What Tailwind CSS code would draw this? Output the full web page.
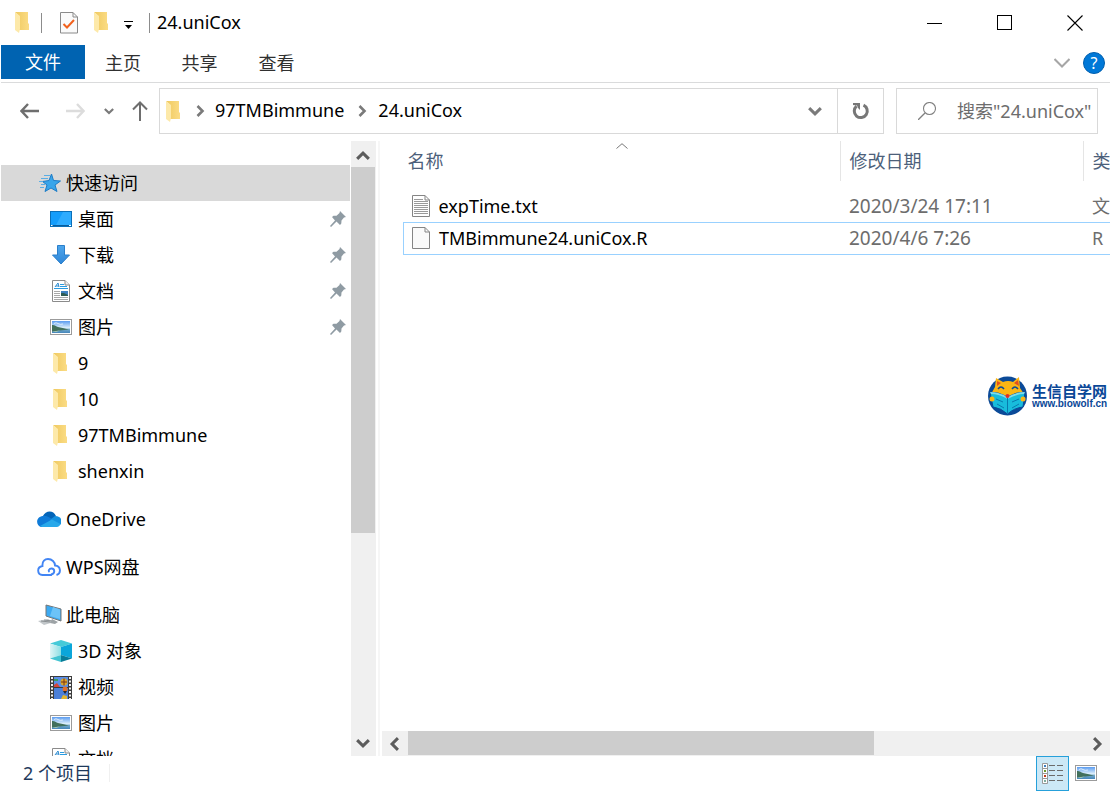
<!DOCTYPE html>
<html lang="zh-CN">
<head>
<meta charset="utf-8">
<title>24.uniCox</title>
<script src="https://cdn.jsdelivr.net/npm/@tailwindcss/browser@4"></script>
</head>
<body class="bg-white">
<svg width="0" height="0" class="absolute" aria-hidden="true">
  <defs>
    <linearGradient id="gFold" x1="0" x2="1"><stop offset="0" stop-color="#efc95f"/><stop offset="1" stop-color="#fbdc85"/></linearGradient>
    <linearGradient id="gSky" x1="0" x2="0" y1="0" y2="1"><stop offset="0" stop-color="#5b9cf0"/><stop offset=".6" stop-color="#e6f4fb"/></linearGradient>
    <linearGradient id="gSea" x1="0" x2="0" y1="0" y2="1"><stop offset="0" stop-color="#7db0cf"/><stop offset="1" stop-color="#4586ba"/></linearGradient>
    <linearGradient id="gCube" x1="0" x2="1"><stop offset="0" stop-color="#e0f5f6"/><stop offset="1" stop-color="#8bdfe4"/></linearGradient>
    <linearGradient id="gDown" x1="0" x2="0" y1="0" y2="1"><stop offset="0" stop-color="#4ea6ec"/><stop offset="1" stop-color="#2e86d8"/></linearGradient>
  </defs>
  <symbol id="folder" viewBox="0 0 14 21">
    <path d="M0 0H13V11L14 12V18H4V4Z" fill="url(#gFold)"/>
    <path d="M0 0L5 4V17L4 21L0 18Z" fill="#fde9a9"/>
  </symbol>
  <symbol id="picture" viewBox="0 0 22 16">
    <rect x=".5" y=".5" width="21" height="15" fill="#fff" stroke="#9b9b9b"/>
    <rect x="2" y="2" width="18" height="12" fill="url(#gSky)"/>
    <path d="M4 4.500Q6 3 8 4.500T13 5" fill="none" stroke="#dcecfb"/>
    <path d="M2 9.500H20V14H2Z" fill="url(#gSea)"/>
    <path d="M2 6C4 5.500 6 7 8 8C11 8.500 14 9.500 19 10.500L10 11.500L2 12.500Z" fill="#42705c"/>
    <path d="M2 12.500L10 11.500L6 13Z" fill="#a9cbb0"/>
  </symbol>
  <symbol id="document" viewBox="0 0 18 22">
    <path d="M.5 .5H13L17.500 5V21.500H.5Z" fill="#fff" stroke="#8b8b8b"/>
    <path d="M13 .5V5H17.500" fill="#f1f1f1" stroke="#8b8b8b"/>
    <path d="M3 7L6 3L7 7M4 6H7" fill="none" stroke="#2a8ad0" stroke-width="1"/>
    <path d="M8 4.500H12M8 6.500H15M2 8.500H16" stroke="#2a9be0" stroke-width="1"/>
    <path d="M2 11.500H8M2 13.500H8M2 15.500H8M2 17.500H16M2 19.500H16" stroke="#a8a8a8"/>
    <rect x="9" y="11" width="7" height="5" fill="#3d7fc0"/><path d="M9 13L12 13L16 15V16H9Z" fill="#2f5b52"/>
  </symbol>
  <symbol id="pin" viewBox="0 0 16 16">
    <path d="M10 0L16 6L14 6.600L11.500 9.500L11.300 12.500L10 14L6.500 10.500L1 16L0 15L5 9.500L2 6L3.500 4.800L6.500 4.800L9.500 2Z" fill="#8f9ba3"/>
  </symbol>
  <symbol id="chev" viewBox="0 0 12 12"><path d="M1 3.500L6 8.500L11 3.500" fill="none" stroke="currentColor" stroke-width="2.600"/></symbol>
</svg>

<div class="flex h-screen min-h-0 flex-col overflow-hidden bg-white px-px font-['Noto_Sans','Noto_Sans_CJK_SC',sans-serif] text-[18px] leading-6 text-black">

  <!-- Title bar -->
  <header class="flex h-[45px] shrink-0 items-center">
    <div class="flex items-center pl-[14px]">
      <svg class="h-[21px] w-[14px]"><use href="#folder"/></svg>
      <span class="ml-3 h-5 w-px bg-[#8c8c8c]"></span>
      <button aria-label="属性" class="ml-[18px]">
        <svg class="block h-[22px] w-[18px]" viewBox="0 0 18 22"><path d="M1 .5H13L17.500 5V21H.500V.5Z" fill="#fafafa" stroke="#8a8a8a"/><path d="M13 .5V5H17.500" fill="none" stroke="#8a8a8a"/><path d="M3.500 12L7 15.500L14 8" fill="none" stroke="#f2611c" stroke-width="2"/></svg>
      </button>
      <button aria-label="新建文件夹" class="ml-4"><svg class="block h-[21px] w-[14px]"><use href="#folder"/></svg></button>
      <button aria-label="自定义快速访问工具栏" class="ml-4 pt-1"><svg class="block h-2 w-[9px]" viewBox="0 0 9 8"><path d="M0 .5H9" stroke="#000"/><path d="M1 4H8L4.500 8Z"/></svg></button>
      <span class="ml-4 h-5 w-px bg-[#8c8c8c]"></span>
    </div>
    <h1 class="ml-[7px] flex-1 pb-[2px]">24.uniCox</h1>
    <div class="flex h-full">
      <button aria-label="最小化" class="grid w-[70px] place-items-center"><svg class="h-4 w-4" viewBox="0 0 16 16"><path d="M0 8.500H15" stroke="#000"/></svg></button>
      <button aria-label="最大化" class="grid w-[70px] place-items-center"><svg class="h-4 w-4" viewBox="0 0 16 16"><rect x=".5" y=".5" width="14" height="14" fill="none" stroke="#000"/></svg></button>
      <button aria-label="关闭" class="grid w-[70px] place-items-center"><svg class="h-4 w-4" viewBox="0 0 16 16"><path d="M.500 .5L15.500 15.500M15.500 .5L.500 15.500" stroke="#000" stroke-width="1.100"/></svg></button>
    </div>
  </header>

  <!-- Ribbon tabs -->
  <nav class="flex h-[38px] shrink-0 items-start border-b border-[#dadbdc] text-[#303030]">
    <button class="h-[34px] w-[84px] bg-[#0063b1] text-white">文件</button>
    <button class="h-[36px] w-[76px]">主页</button>
    <button class="h-[36px] w-[77px]">共享</button>
    <button class="h-[36px] w-[77px]">查看</button>
    <div class="ml-auto flex h-[36px] items-center gap-[13px] pr-[5px]">
      <button aria-label="展开功能区"><svg class="block h-[10px] w-4" viewBox="0 0 16 10"><path d="M.5 1L8 8.500L15.500 1" fill="none" stroke="#a6a6a6" stroke-width="2"/></svg></button>
      <button aria-label="帮助" class="grid h-[22px] w-[22px] place-items-center rounded-full border border-[#005fae] bg-[#0078d7] text-[16px] leading-5 text-white">?</button>
    </div>
  </nav>

  <!-- Address row -->
  <div class="flex h-[58px] shrink-0 items-start pt-[5px] pr-3">
    <div class="flex h-[46px] w-[158px] shrink-0 items-center pl-[19px]">
      <button aria-label="后退"><svg class="block h-4 w-5" viewBox="0 0 20 16"><path d="M8 1L1.500 8L8 15M2 8H19" fill="none" stroke="#6e6e6e" stroke-width="2.400"/></svg></button>
      <button aria-label="前进" class="ml-[25px]"><svg class="block h-4 w-5" viewBox="0 0 20 16"><path d="M12 1L18.500 8L12 15M18 8H1" fill="none" stroke="#dcdcdc" stroke-width="2.400"/></svg></button>
      <button aria-label="最近位置" class="ml-[19px] text-[#7a7a7a]"><svg class="block h-[10px] w-[10px]"><use href="#chev"/></svg></button>
      <button aria-label="向上" class="ml-[18px]"><svg class="block h-5 w-4" viewBox="0 0 16 20"><path d="M1 8.500L8 1.500L15 8.500M8 2V20" fill="none" stroke="#6e6e6e" stroke-width="2"/></svg></button>
    </div>
    <div class="flex h-[46px] min-w-0 flex-1 items-center border border-[#d9d9d9]">
      <svg class="ml-[6px] h-[21px] w-[14px]"><use href="#folder"/></svg>
      <svg class="ml-[14px] h-3 w-3 -rotate-90 text-[#7a7a7a]"><use href="#chev"/></svg>
      <a href="#" class="ml-[9px] pb-[2px]">97TMBimmune</a>
      <svg class="ml-3 h-3 w-3 -rotate-90 text-[#7a7a7a]"><use href="#chev"/></svg>
      <a href="#" class="ml-[10px] pb-[2px]">24.uniCox</a>
      <button aria-label="以前的位置" class="ml-auto grid h-full w-11 place-items-center text-[#7a7a7a]"><svg class="h-[14px] w-[14px]"><use href="#chev"/></svg></button>
      <button aria-label="刷新" class="grid h-full w-[46px] place-items-center border-l border-[#d9d9d9]"><svg class="h-[18px] w-[18px]" viewBox="0 0 18 18"><path d="M11.500 3.200A6.500 6.500 0 1 1 4.500 4.200" fill="none" stroke="#777" stroke-width="3"/><path d="M1 1H8V8L6 6L5 3.500L1 3Z" fill="#777"/></svg></button>
    </div>
    <label class="ml-3 flex h-[46px] w-[202px] items-center border border-[#d9d9d9]">
      <svg class="ml-[21px] h-[18px] w-[18px] shrink-0" viewBox="0 0 18 18"><circle cx="11.500" cy="6.500" r="6" fill="none" stroke="#808080" stroke-width="1.100"/><path d="M7 11L0 18" stroke="#808080" stroke-width="1.300"/></svg>
      <input type="text" aria-label="搜索" placeholder='搜索"24.uniCox"' class="ml-[21px] w-full min-w-0 bg-transparent outline-none placeholder:text-[#6d6d6d]">
    </label>
  </div>

  <!-- Body -->
  <div class="flex min-h-0 flex-1">
    <nav class="w-[350px] shrink-0 overflow-hidden pt-6">
      <ul>
        <li class="mr-px"><a href="#" class="flex h-9 items-center bg-[#d9d9d9] pl-[38px]">
          <svg class="mr-[5px] h-[20px] w-[22px]" viewBox="0 0 22 20"><path d="M12.500 1L14.500 7.500L21.500 8L16 12L18 18.500L12 15L6 18.500L8 12L3.500 8.500L10 7.500Z" fill="#38a5ea" stroke="#1d7cc7"/><path d="M5 2.500H11M2 5.500H9M0 8.500H4M2 11.500H6M1 14.500H5" stroke="#5aaee5"/></svg>快速访问</a></li>
        <li><a href="#" class="flex h-9 items-center pr-[5px] pl-[49px]"><svg class="mr-[6px] h-4 w-[22px]" viewBox="0 0 22 16"><rect x=".5" y=".5" width="21" height="15" fill="#149dfb" stroke="#0a6fb8"/><path d="M13 1H21V14H6Z" fill="#2eacff"/><path d="M1 14.500H21" stroke="#085c9c"/><path d="M1 14.500H2.500M19 14.500H21" stroke="#fff"/></svg>桌面<svg class="ml-auto h-4 w-4"><use href="#pin"/></svg></a></li>
        <li><a href="#" class="flex h-9 items-center pr-[5px] pl-[49px]"><svg class="mr-[6px] h-5 w-[22px]" viewBox="0 0 22 20"><path d="M7.500 .5H14.500V10H19.500L11 19L2.500 10H7.500Z" fill="url(#gDown)" stroke="#2a7fcb"/></svg>下载<svg class="ml-auto h-4 w-4"><use href="#pin"/></svg></a></li>
        <li><a href="#" class="flex h-9 items-center pr-[5px] pl-[51px]"><svg class="mr-2 h-[22px] w-[18px]"><use href="#document"/></svg>文档<svg class="ml-auto h-4 w-4"><use href="#pin"/></svg></a></li>
        <li><a href="#" class="flex h-9 items-center pr-[5px] pl-[49px]"><svg class="mr-[6px] h-4 w-[22px]"><use href="#picture"/></svg>图片<svg class="ml-auto h-4 w-4"><use href="#pin"/></svg></a></li>
        <li><a href="#" class="flex h-9 items-center pl-[52px]"><svg class="mr-[11px] h-[21px] w-[14px]"><use href="#folder"/></svg>9</a></li>
        <li><a href="#" class="flex h-9 items-center pl-[52px]"><svg class="mr-[11px] h-[21px] w-[14px]"><use href="#folder"/></svg>10</a></li>
        <li><a href="#" class="flex h-9 items-center pl-[52px]"><svg class="mr-[11px] h-[21px] w-[14px]"><use href="#folder"/></svg>97TMBimmune</a></li>
        <li><a href="#" class="flex h-9 items-center pl-[52px]"><svg class="mr-[11px] h-[21px] w-[14px]"><use href="#folder"/></svg>shenxin</a></li>
        <li class="mt-3"><a href="#" class="flex h-9 items-center pl-[36px]"><svg class="mr-[5px] h-4 w-6" viewBox="0 0 24 16"><path d="M6 5C8 0 16-2 19 5L14 10L5 6Z" fill="#0364b8"/><path d="M4 16C-1 15-2 6 6 5C10 4 13 7 16 9L8 16Z" fill="#0f7bd8"/><path d="M14 8L18 5C26 5 25 12 23 14L12 11Z" fill="#1490df"/><path d="M3 15L15 8.500L23.500 13C23 15 21 16 20 16H5Z" fill="#28a8ea"/></svg>OneDrive</a></li>
        <li class="mt-3"><a href="#" class="flex h-9 items-center pl-[36px]"><svg class="mr-[5px] h-[18px] w-6" viewBox="0 0 24 18"><path d="M15 17H5.500C0 16.500-.5 9 5.500 8C5 3 8 1 11 1C15 1 18 4 18 7.500C24 8 24.500 15.500 19.500 17M14 16.500C18.500 15.500 18 10.500 14.500 10.500C12 10.500 11 13 12.500 14" fill="none" stroke="#4285f4" stroke-width="1.900"/></svg>WPS网盘</a></li>
        <li class="mt-3"><a href="#" class="flex h-9 items-center pl-[37px]"><svg class="mr-[4px] h-[22px] w-6" viewBox="0 0 24 22"><path d="M8 1L23 5V17L8 12Z" fill="#3caaf2" stroke="#777"/><path d="M15 3L22 5.500V15L12 12Z" fill="#6cc3f8"/><path d="M0 17L10 15L16 18L6 21Z" fill="#c2c7ca"/><path d="M3 17L12 18M6 16L14 17" stroke="#8a8f92"/><path d="M14 15L20 18L17 20L12 19Z" fill="#9da3a6"/></svg>此电脑</a></li>
        <li><a href="#" class="flex h-9 items-center pl-[49px]"><svg class="mr-[6px] h-[22px] w-[22px]" viewBox="0 0 22 22"><path d="M0 3.500L11 0L22 3.500L11 7Z" fill="#45cad8"/><path d="M0 3.500L11 7V15L0 18.500Z" fill="url(#gCube)"/><path d="M22 3.500L11 7V15L22 18.500Z" fill="#0ba6da"/><path d="M0 18.500L11 15V22Z" fill="#43c4d2"/><path d="M22 18.500L11 15V22Z" fill="#087d99"/></svg>3D 对象</a></li>
        <li><a href="#" class="flex h-9 items-center pl-[49px]"><svg class="mr-[6px] h-[23px] w-[22px]" viewBox="0 0 22 23"><path d="M0 0H22V23H0Z" fill="#3c3c3c"/><path d="M2 1V23M20 1V23" stroke="#f2f2f2" stroke-width="2" stroke-dasharray="2 1.500"/><rect x="4" y="1" width="14" height="10" fill="#5a8fe8"/><rect x="4" y="12" width="14" height="11" fill="#4b7fd9"/><circle cx="14" cy="6" r="3.500" fill="#dda726"/><path d="M14 2.500V9.500M11 6H17" stroke="#7a3018"/><path d="M4 9L7 7L10 11H4Z" fill="#d4453c"/><circle cx="15" cy="13" r="2.500" fill="#e1702b"/><path d="M13 15L15 18L17 15Z" fill="#282828"/><path d="M11 23L13 19L17 20V23Z" fill="#e2b52e"/><path d="M4 3H8V5H4Z" fill="#3c9c60"/></svg>视频</a></li>
        <li><a href="#" class="flex h-9 items-center pl-[49px]"><svg class="mr-[6px] h-4 w-[22px]"><use href="#picture"/></svg>图片</a></li>
        <li><a href="#" class="flex h-9 items-center pl-[51px]"><svg class="mr-2 h-[22px] w-[18px]"><use href="#document"/></svg>文档</a></li>
      </ul>
    </nav>

    <!-- Vertical scroll bar -->
    <div class="flex w-[25px] shrink-0 flex-col bg-[#f0f0f0]">
      <button aria-label="向上滚动" class="mr-px grid h-[26px] place-items-center pt-1 text-[#5c5c5c]"><svg class="h-[14px] w-[14px] rotate-180"><use href="#chev"/></svg></button>
      <div class="mr-px flex-[366] bg-[#cdcdcd]"></div>
      <div class="flex-[197]"></div>
      <button aria-label="向下滚动" class="mr-px grid h-[26px] place-items-center text-[#5c5c5c]"><svg class="h-[14px] w-[14px]"><use href="#chev"/></svg></button>
    </div>
    <div class="ml-[2px] w-[2px] shrink-0 bg-[#f6f6f6]"></div>

    <!-- File list -->
    <main class="relative ml-[2px] flex min-w-0 flex-1 flex-col">
      <div class="min-h-0 flex-1 overflow-hidden pl-[21px]">
        <table class="w-full table-fixed border-collapse text-left">
          <colgroup><col><col class="w-[243px]"><col class="w-[27px]"></colgroup>
          <thead class="text-[#4c607a]">
            <tr class="h-10">
              <th scope="col" aria-sort="ascending" class="relative p-0 pl-1 font-normal">名称<svg class="absolute inset-x-0 top-[2px] mx-auto h-[6px] w-3" viewBox="0 0 12 6"><path d="M.5 5.500L6 .7L11.500 5.500" fill="none" stroke="#777"/></svg></th>
              <th scope="col" class="border-l border-[#e5e5e5] p-0 pl-[9px] font-normal">修改日期</th>
              <th scope="col" class="overflow-hidden border-l border-[#e5e5e5] p-0 pl-[9px] font-normal whitespace-nowrap">类</th>
            </tr>
          </thead>
          <tbody class="text-[#6d6d6d]">
            <tr class="h-[9px]"><td colspan="3" class="p-0"></td></tr>
            <tr class="h-8">
              <td class="p-0 pl-2 text-black"><span class="flex items-center"><svg class="mr-[9px] h-[22px] w-[18px]" viewBox="0 0 18 22"><path d="M.5 .5H13L17.500 5V21.500H.5Z" fill="#fff" stroke="#858585"/><path d="M13 .5V5H17.500" fill="none" stroke="#858585"/><path d="M2 4.500H11M2 6.500H16M2 8.500H16M2 10.500H16M2 12.500H16M2 14.500H16M2 16.500H16M2 18.500H16" stroke="#9a9a9a"/></svg>expTime.txt</span></td>
              <td class="p-0 pl-[9px] text-[19px]">2020/3/24 17:11</td>
              <td class="overflow-hidden p-0 pl-[9px]">文</td>
            </tr>
            <tr class="h-8 border border-r-0 border-[#99d1ff]">
              <td class="p-0 pl-2 text-black"><span class="flex items-center"><svg class="mr-[9px] h-[22px] w-[18px]" viewBox="0 0 18 22"><path d="M.5 .5H13L17.500 5V21.500H.5Z" fill="#fafafa" stroke="#858585"/><path d="M13 .5V5H17.500" fill="none" stroke="#858585"/></svg>TMBimmune24.uniCox.R</span></td>
              <td class="p-0 pl-[9px] text-[19px]">2020/4/6 7:26</td>
              <td class="p-0 pl-[9px]">R</td>
            </tr>
          </tbody>
        </table>
      </div>

      <!-- Watermark -->
      <div class="absolute top-[234px] right-[3px] flex items-center gap-[3px] text-[#0a4797]">
        <svg class="h-[42px] w-[42px]" viewBox="0 0 42 42"><circle cx="20.500" cy="21" r="19.500" fill="#0b4a98"/><path d="M9 3L16 7Q21 5 26 7L32 2L33 13L37 19L21 26L4 19L8 12Z" fill="#fbb614"/><path d="M10 6L14 8L10 11ZM31 5L27 8L32 11Z" fill="#e2501e"/><path d="M11 14Q14 10 17 14M25 14Q28 10 31 14" fill="none" stroke="#0b4a98" stroke-width="1.500"/><path d="M3 17Q12 17 20.500 22Q29 17 38 17L36 32Q27 33 20.500 39Q14 33 6 32Z" fill="#18bcdc" stroke="#0b4a98"/><path d="M3 17Q12 17 20.500 22V24Q12 19 4 19ZM38 17Q29 17 20.500 22V24Q29 19 37 19Z" fill="#7fdcec"/><path d="M20.500 23V38M9 24L16 27M10 29L17 33M32 24L25 27M32 29L25 33" stroke="#087aae"/><circle cx="20.500" cy="21" r="2" fill="#df3028"/><circle cx="5" cy="24" r="2.500" fill="#fbb614"/><circle cx="36" cy="24" r="2.500" fill="#fbb614"/></svg>
        <div class="w-[75px] whitespace-nowrap font-bold">
          <div class="text-[15px] leading-4">生信自学网</div>
          <div class="font-['Liberation_Sans',sans-serif] text-[10px] leading-[10px]">www.biowolf.cn</div>
        </div>
      </div>

      <!-- Horizontal scroll bar -->
      <div class="flex h-[25px] shrink-0 bg-[#f0f0f0]">
        <button aria-label="向左滚动" class="grid w-[26px] place-items-center text-[#5c5c5c]"><svg class="h-[14px] w-[14px] rotate-90"><use href="#chev"/></svg></button>
        <div class="mb-px flex-[466] bg-[#cdcdcd]"></div>
        <div class="flex-[210]"></div>
        <button aria-label="向右滚动" class="grid w-[26px] place-items-center text-[#5c5c5c]"><svg class="h-[14px] w-[14px] -rotate-90"><use href="#chev"/></svg></button>
      </div>
    </main>
  </div>

  <!-- Status bar -->
  <footer class="flex h-9 shrink-0 items-start pr-[13px] text-[#1e395b]">
    <span class="pt-[5px] pl-[22px]">2 个项目</span>
    <span class="mt-2 ml-[17px] h-[18px] w-px bg-[#f0f0f0]"></span>
    <button aria-label="详细信息" class="ml-auto grid h-[35px] w-[33px] place-items-center border border-[#26a0da] bg-[#cce8f6]">
      <svg class="h-[21px] w-[21px]" viewBox="0 0 21 21"><path d="M.5 .5H5.500V20.500H.5ZM.5 5.500H5.500M.5 10.500H5.500M.5 15.500H5.500" fill="#fff" stroke="#999"/><path d="M2 2H4V4H2Z" fill="#3c7fc0"/><path d="M2 7H4V9H2Z" fill="#6f9b2e"/><path d="M2 12H4V14H2Z" fill="#c23b1d"/><path d="M2 17H4V19H2Z" fill="#7fae9e"/><path d="M7 2.500H13M15 2.500H21M7 7.500H13M15 7.500H21M7 12.500H13M15 12.500H21M7 17.500H13M15 17.500H21" stroke="#6b6b6b"/></svg>
    </button>
    <button aria-label="大缩略图" class="mt-[9px] ml-[6px]"><svg class="block h-4 w-[22px]"><use href="#picture"/></svg></button>
  </footer>
</div>
</body>
</html>
